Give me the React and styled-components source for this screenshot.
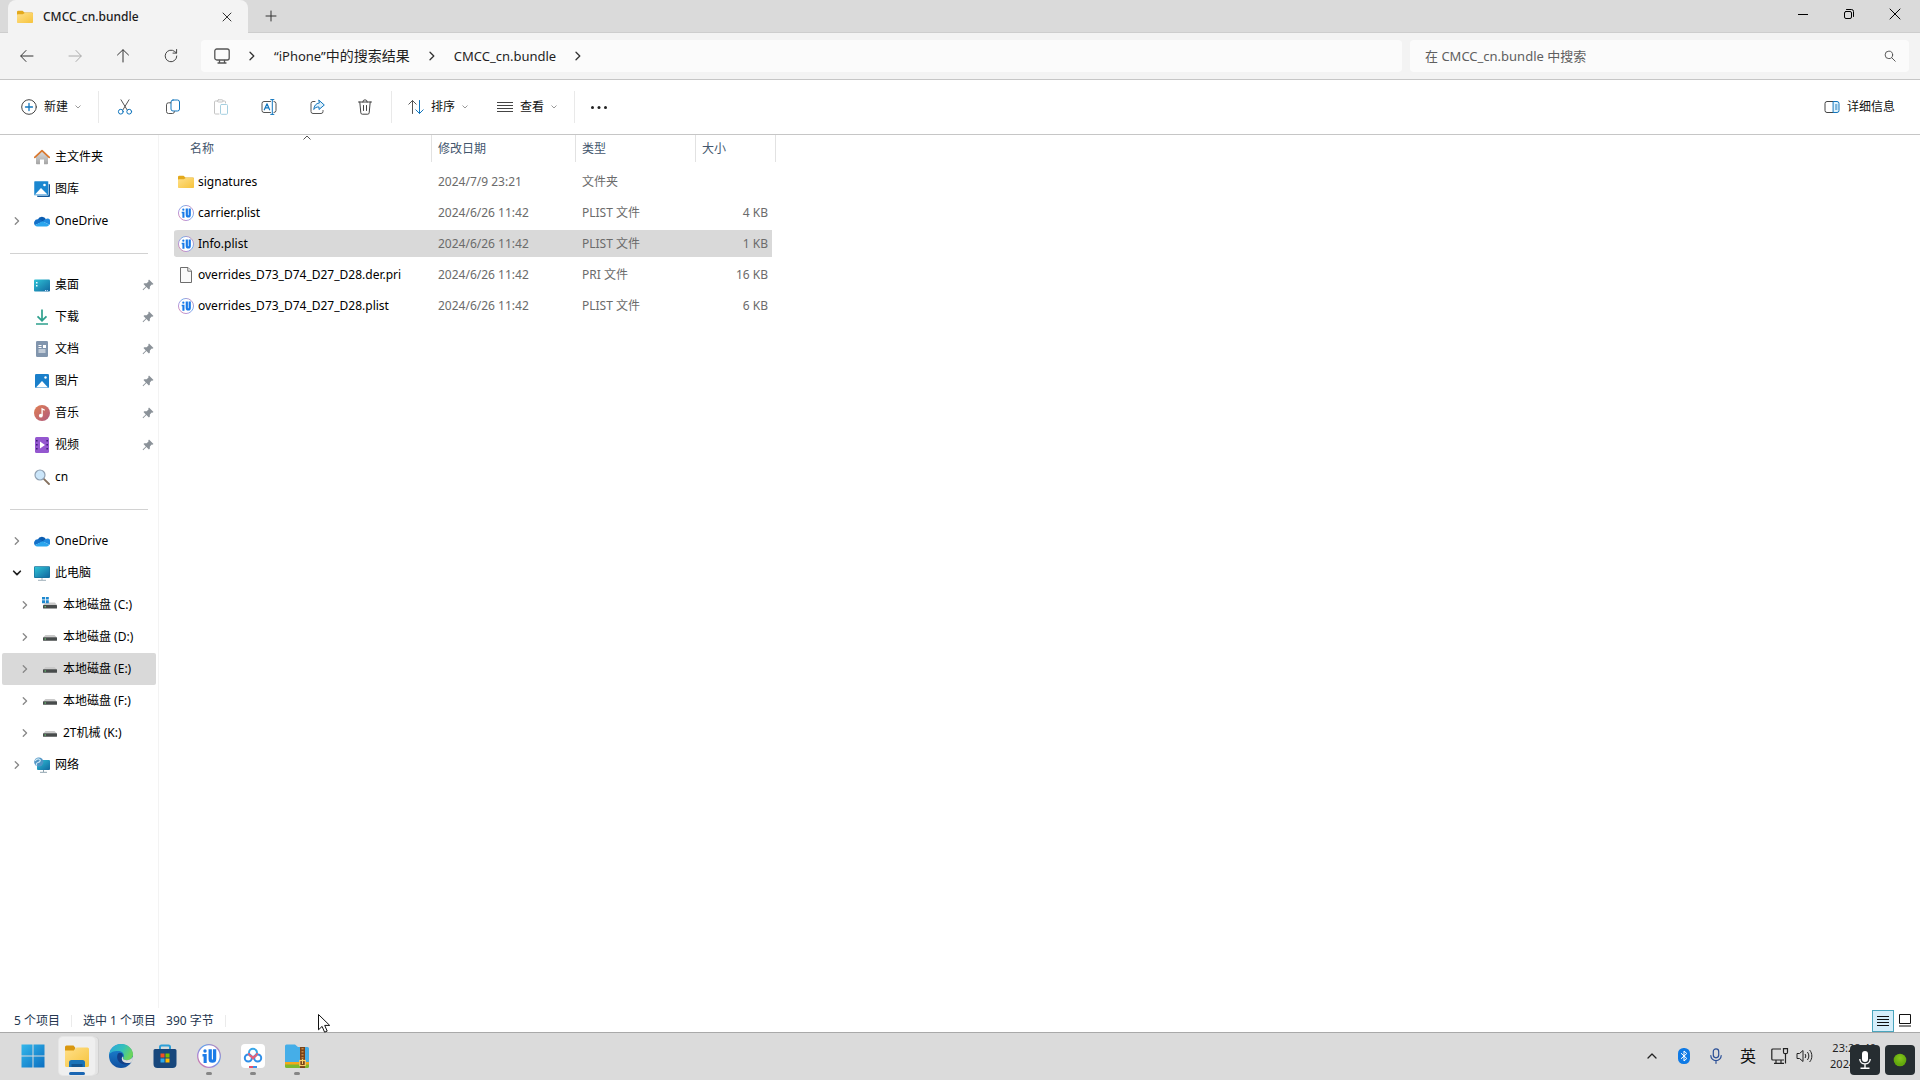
import React from "react";
import styled, { createGlobalStyle, css } from "styled-components";

const FONT = '"Noto Sans", "Noto Sans CJK SC", sans-serif';

const Global = createGlobalStyle`
  * { box-sizing: border-box; }
  html, body { margin: 0; padding: 0; }
  body { font-family: ${FONT}; font-size: 12px; color: #000; background: #fff; overflow: hidden; }
  button, input { font: inherit; color: inherit; }
  button { border: 0; padding: 0; margin: 0; background: none; cursor: default; }
  svg { display: block; flex: none; }
`;

/* ---------- shell ---------- */
const Window = styled.div`
  display: flex;
  flex-direction: column;
  height: 100vh;
`;

/* ---------- title bar ---------- */
const TitleBar = styled.header`
  display: flex;
  height: 33px;
  padding-left: 8px;
  padding-right: 2px;
  background: #dadada;
  border-bottom: 1px solid #cdcdcd;
`;
const Tab = styled.div`
  display: flex;
  align-items: center;
  width: 240px;
  height: 33px;
  padding: 0 11px 0 9px;
  gap: 10px;
  background: #f3f3f3;
  border-radius: 8px 8px 0 0;
  font-weight: 500;
  color: #1b1b1b;
`;
const TabTitle = styled.span`
  flex: 1;
  line-height: 16px;
`;
const TabButton = styled.button`
  display: grid;
  place-items: center;
  width: ${(p) => p.$w || 20}px;
  height: 32px;
`;
const Spacer = styled.div`
  flex: 1;
`;
const WinButton = styled.button`
  display: grid;
  place-items: center;
  width: 46px;
  height: 28px;
`;

/* ---------- navigation bar ---------- */
const NavBar = styled.nav`
  display: flex;
  align-items: center;
  height: 47px;
  padding: 0 11px 0 3px;
  background: #f3f3f3;
  border-bottom: 1px solid #c6c6c6;
`;
const NavButton = styled.button`
  display: grid;
  place-items: center;
  width: 48px;
  height: 32px;
`;
const Address = styled.div`
  display: flex;
  align-items: center;
  flex: 1188;
  height: 32px;
  margin-left: 6px;
  padding-left: 13px;
  background: #fbfbfb;
  border-radius: 4px;
  font-size: 14px;
  color: #1f1f1f;
`;
const Crumb = styled.button`
  line-height: 20px;
  white-space: nowrap;
`;
const Latin = styled.span`
  font-size: 13px;
`;
const CrumbArrow = styled.span`
  display: grid;
  place-items: center;
  width: 44px;
`;
const SearchBox = styled.label`
  display: flex;
  align-items: center;
  flex: 471;
  height: 32px;
  margin-left: 8px;
  padding: 0 13px 0 15px;
  background: #fbfbfb;
  border-radius: 4px;
`;
const SearchInput = styled.input`
  flex: 1;
  min-width: 0;
  padding: 0;
  border: 0;
  outline: 0;
  background: transparent;
  font-size: 13px;
  line-height: 20px;
  &::placeholder { color: #5f5f5f; opacity: 1; }
`;

/* ---------- command bar ---------- */
const CommandBar = styled.div`
  display: flex;
  align-items: center;
  height: 55px;
  padding: 0 25px 0 11px;
  background: #fff;
  border-bottom: 1px solid #c6c6c6;
`;
const Command = styled.button`
  display: flex;
  align-items: center;
  justify-content: center;
  gap: 7px;
  height: 32px;
  padding: 0 ${(p) => p.$pad || 0}px;
  width: ${(p) => (p.$icon ? "48px" : "auto")};
  color: #111;
  line-height: 16px;
`;
const Separator = styled.i`
  width: 1px;
  height: 32px;
  margin-left: ${(p) => p.$before || 0}px;
  margin-right: ${(p) => p.$after || 0}px;
  background: #e9e9e9;
`;

/* ---------- body ---------- */
const Main = styled.div`
  display: flex;
  flex: 1;
  min-height: 0;
`;
const Sidebar = styled.aside`
  width: 159px;
  padding-top: 6px;
  border-right: 1px solid #f3f3f3;
`;
const SideList = styled.ul`
  list-style: none;
  margin: 0;
  padding: 0;
`;
const SideItem = styled.li`
  display: flex;
  align-items: center;
  height: 32px;
  margin: 0 2px;
  padding-left: ${(p) => (p.$nested ? 16 : 8)}px;
  border-radius: 2px;
  background: ${(p) => (p.$selected ? "#d9d9d9" : "transparent")};
`;
const Expander = styled.button`
  width: 14px;
  height: 16px;
  display: grid;
  place-items: center;
  margin-right: 10px;
`;
const SideLink = styled.a`
  display: flex;
  align-items: center;
  flex: 1;
  gap: 5px;
  color: #000;
  text-decoration: none;
  line-height: 16px;
`;
const PinSlot = styled.span`
  padding-right: 2px;
`;
const SideRule = styled.hr`
  height: 1px;
  border: 0;
  margin: 16px 10px 15px;
  background: #d2d2d2;
`;

/* ---------- file table ---------- */
const Content = styled.main`
  flex: 1;
  padding-left: 15px;
`;
const Table = styled.table`
  border-spacing: 0;
  table-layout: fixed;
  width: 602px;
`;
const HeadCell = styled.th`
  position: relative;
  width: ${(p) => p.$w}px;
  height: 31px;
  padding: 0 0 4px;
  text-align: left;
  font-weight: 400;
  color: #43566d;
`;
const HeadLabel = styled.div`
  display: flex;
  align-items: center;
  height: 27px;
  padding: 0 0 2px ${(p) => (p.$first ? 16 : 6)}px;
  border-right: 1px solid #e2e2e2;
`;
const SortMark = styled.span`
  position: absolute;
  top: 0;
  left: 50%;
`;
const Cell = styled.td`
  height: 31px;
  padding: 0 0 0 ${(p) => (p.$first ? 4 : 6)}px;
  border: 0 solid transparent;
  border-width: 2px 0;
  background-clip: padding-box;
  color: #6b6b6b;
  line-height: 16px;
  white-space: nowrap;
  ${(p) => p.$first && css`color: #000; border-radius: 4px 0 0 4px;`}
  ${(p) => p.$last && css`
    text-align: right;
    padding-right: 4px;
    border-right-width: 4px;
    border-radius: 0 4px 4px 0;
  `}
`;
const FileRow = styled.tr`
  ${Cell} { background-color: ${(p) => (p.$selected ? "#d9d9d9" : "transparent")}; }
`;
const FileName = styled.span`
  display: flex;
  align-items: center;
  gap: 4px;
`;

/* ---------- status bar ---------- */
const StatusBar = styled.footer`
  display: flex;
  align-items: center;
  height: 24px;
  padding: 1px 4px 0 14px;
  color: #24364f;
  line-height: 16px;
`;
const StatusRule = styled.i`
  width: 1px;
  height: 12px;
  margin: 0 11px;
  background: #ebebeb;
`;
const StatusGap = styled.span`
  width: 10px;
`;
const ViewButton = styled.button`
  display: grid;
  place-items: center;
  width: 22px;
  height: 22px;
  ${(p) => p.$on && css`background: #d5eefa; border: 1px solid #4aa5bd;`}
`;

/* ---------- task bar ---------- */
const TaskBar = styled.footer`
  position: relative;
  display: flex;
  align-items: center;
  height: 48px;
  padding: 0 44px 2px 11px;
  background: #dbdbdb;
  border-top: 1px solid #a9a9a9;
`;
const TaskButton = styled.button`
  position: relative;
  display: grid;
  place-items: center;
  width: 44px;
  height: 40px;
`;
const TaskPlate = styled.span`
  display: grid;
  place-items: center;
  width: 36px;
  height: 38px;
  border-radius: 4px;
  ${(p) => p.$on && css`background: #efefef; box-shadow: 0 0 0 1px #e6e6e6, 3px 0 0 0 #e4e4e4, 4px 0 0 0 #cfcfcf;`}
`;
const Running = styled.i`
  position: absolute;
  left: 50%;
  bottom: 1px;
  width: ${(p) => (p.$on ? 16 : 6)}px;
  height: 3px;
  margin-left: ${(p) => (p.$on ? -8 : -3)}px;
  border-radius: 2px;
  background: ${(p) => (p.$on ? "#1a66b3" : "#868686")};
`;
const Tray = styled.div`
  display: flex;
  align-items: center;
  height: 100%;
`;
const TrayButton = styled.button`
  display: grid;
  place-items: center;
  width: ${(p) => p.$w || 32}px;
  height: 32px;
  font-size: 16px;
  line-height: 20px;
  color: #111;
`;
const Clock = styled.button`
  width: 64px;
  text-align: right;
  font-size: 11px;
  line-height: 16px;
  color: #222;
`;
const Overlay = styled.div`
  position: absolute;
  top: 12px;
  right: 5px;
  display: flex;
  gap: 5px;
`;
const OverlayKey = styled.button`
  display: grid;
  place-items: center;
  width: 30px;
  height: 30px;
  border-radius: 4px;
  background: #262d31;
`;
const Pointer = styled.svg`
  position: fixed;
  left: 317px;
  top: 1013px;
`;

/* ---------- icons ---------- */
const Line = ({ size = 16, c = "#444", w = 1, children, ...r }) => (
  <svg width={size} height={size} viewBox="0 0 16 16" fill="none" stroke={c} strokeWidth={w} strokeLinecap="round" strokeLinejoin="round" aria-hidden="true" {...r}>
    {children}
  </svg>
);
const Chevron = ({ dir = "right", c = "#333", size = 16, w = 1 }) => {
  const d = { right: "M6 4.2 9.8 8 6 11.8", down: "M4.2 6 8 9.8 11.8 6", up: "M4 10 8 6l4 4" }[dir];
  return <Line c={c} size={size} w={w}><path d={d} /></Line>;
};
const SmallDown = () => (
  <svg width="6" height="4" viewBox="0 0 6 4" fill="none" stroke="#999" aria-hidden="true"><path d="M.5.5 3 3 5.5.5" /></svg>
);
const Folder = () => (
  <svg width="16" height="16" viewBox="0 0 16 16" aria-hidden="true">
    <defs><linearGradient id="fold" x1="0" y1="0" x2="1" y2="1"><stop offset="0" stopColor="#ffe08a" /><stop offset="1" stopColor="#f6c33c" /></linearGradient></defs>
    <path d="M0 3a1.3 1.3 0 0 1 1.3-1.3h4.2L7.5 3.5H15a1 1 0 0 1 1 1V8H0z" fill="#e3a91c" />
    <path d="M0 6.2C0 5.5.4 5.2 1 5.2h4.800L7.800 3.900H15c.6 0 1 .4 1 1v8c0 .7-.4 1.100-1 1.100H1c-.6 0-1-.4-1-1.100z" fill="url(#fold)" />
  </svg>
);
const IU = ({ size = 16 }) => (
  <svg width={size} height={size} viewBox="0 0 24 24" aria-hidden="true">
    <defs><linearGradient id="iu" x1="0" y1="1" x2="1" y2="0"><stop offset="0" stopColor="#e0708f" /><stop offset=".3" stopColor="#a98ad8" /><stop offset=".6" stopColor="#5aa0ee" /><stop offset="1" stopColor="#e07aa8" /></linearGradient></defs>
    <circle cx="12" cy="12" r="11.300" fill="#fff" stroke="url(#iu)" strokeWidth="1.300" />
    <circle cx="8" cy="7" r="1.700" fill="#1a7be8" />
    <path d="M5.500 10h4.200v9H6.600v-6.500H5.500z" fill="#1a7be8" />
    <path d="M13.200 5.300v9.700a2.200 2.200 0 0 0 4.400 0V5.300" fill="none" stroke="#1a7be8" strokeWidth="3.300" />
  </svg>
);
const Doc = () => (
  <svg width="16" height="16" viewBox="0 0 16 16" fill="#fafafa" stroke="#6d6d6d" aria-hidden="true"><path d="M2.500.5h7.500l3.500 3.500v11.500h-11z" /><path d="M9.800.7v3.500h3.500" /></svg>
);
const SideIcons = {
  home: (
    <svg width="16" height="16" viewBox="0 0 16 16">
      <defs><linearGradient id="hm" x1="0" y1="0" x2="0" y2="1"><stop offset="0" stopColor="#dedede" /><stop offset="1" stopColor="#a4a4a4" /></linearGradient></defs>
      <path d="M2 7.500 8 2l6 5.500V14.500a.8.8 0 0 1-.8.8H10V10.500H6v4.800H2.800a.8.8 0 0 1-.8-.8z" fill="url(#hm)" />
      <path d="M.8 8.300 8 1.700l7.200 6.600" fill="none" stroke="#d9782f" strokeWidth="1.800" strokeLinejoin="round" strokeLinecap="round" />
    </svg>
  ),
  gallery: (
    <svg width="16" height="16" viewBox="0 0 16 16">
      <path d="M3 3h12a1 1 0 0 1 1 1v11a1 1 0 0 1-1 1H4a1 1 0 0 1-1-1z" fill="#11579a" />
      <path d="M1 0h12.500a1 1 0 0 1 1 1v12.500a1 1 0 0 1-1 1H1a1 1 0 0 1-1-1V1a1 1 0 0 1 1-1z" fill="#1b87d0" stroke="#fff" strokeWidth=".5" />
      <path d="M1 13.500 7 7l6.500 6.500z" fill="#fff" /><circle cx="10.500" cy="4" r="1.300" fill="#fff" />
    </svg>
  ),
  cloud: (
    <svg width="16" height="16" viewBox="0 0 16 16">
      <path d="M3.800 6.500A4.500 4.500 0 0 1 12 6.300L8 11z" fill="#0b5cb0" />
      <path d="M3.500 6.300A3.700 3.700 0 0 0 .8 12.200L9 8.500 6.500 6.800a4 4 0 0 0-3-.5z" fill="#1470c8" />
      <path d="M8.500 8.300 11.500 6.200a3.300 3.300 0 0 1 3.800 5.500z" fill="#1e8ae0" />
      <path d="M.8 12.200A3.600 3.600 0 0 0 3.700 13.400h9a3.200 3.200 0 0 0 2.600-1.600L8.500 8.300z" fill="#2ba6ee" />
    </svg>
  ),
  desktop: (
    <svg width="16" height="16" viewBox="0 0 16 16">
      <defs><linearGradient id="dk" x1="0" y1="0" x2="1" y2="1"><stop offset="0" stopColor="#2fc3d6" /><stop offset="1" stopColor="#11679f" /></linearGradient></defs>
      <rect y="2.500" width="16" height="12" rx="1" fill="url(#dk)" />
      <path d="M2 5h1.500v1.500H2zM2 8h1.500v1.500H2z" fill="#e8fbff" /><path d="M11 13h1v1h-1zM12.800 13h1v1h-1z" fill="#cdf" />
    </svg>
  ),
  download: (
    <svg width="16" height="16" viewBox="0 0 16 16" fill="none" stroke="#2ea08d" strokeWidth="1.700">
      <path d="M8 .5v11M3.500 7.300 8 11.700l4.500-4.400M2 15h12" />
    </svg>
  ),
  documents: (
    <svg width="16" height="16" viewBox="0 0 16 16">
      <rect x="2" y="0" width="12" height="16" rx="1.300" fill="#8195ad" />
      <path d="M4.500 4.500h3M4.500 6.500h3M4.500 9h7M4.500 11h7" stroke="#fff" /><path d="M9 4h3v3H9z" fill="#fff" />
    </svg>
  ),
  pictures: (
    <svg width="16" height="16" viewBox="0 0 16 16">
      <rect x="1" y="1" width="14" height="14" rx="1.300" fill="#1a7fca" />
      <path d="M2 14.500 8 8l6 6.500z" fill="#fff" /><circle cx="11.500" cy="4.500" r="1.200" fill="#fff" />
    </svg>
  ),
  music: (
    <svg width="16" height="16" viewBox="0 0 16 16">
      <defs><linearGradient id="mu" x1="0" y1="0" x2="1" y2="1"><stop offset="0" stopColor="#e07f52" /><stop offset="1" stopColor="#b0597f" /></linearGradient></defs>
      <circle cx="8" cy="8" r="8" fill="url(#mu)" /><circle cx="6.800" cy="10.700" r="1.900" fill="#fff" />
      <path d="M8.100 10.700V3.800L10.700 5.300" fill="none" stroke="#fff" strokeWidth="1.300" />
    </svg>
  ),
  video: (
    <svg width="16" height="16" viewBox="0 0 16 16">
      <rect x="1" y="0" width="14" height="16" rx="1.500" fill="#9457cf" />
      <path d="M2 3h1.600v1.600H2zM2 7h1.600v1.600H2zM2 11h1.600v1.600H2zM12.400 3H14v1.600h-1.600zM12.400 7H14v1.600h-1.600zM12.400 11H14v1.600h-1.600z" fill="#40207a" />
      <path d="M6 4.500 11 8l-5 3.500z" fill="#fff" />
    </svg>
  ),
  search: (
    <svg width="16" height="16" viewBox="0 0 16 16">
      <path d="M9.800 9.800 15 15" stroke="#85715f" strokeWidth="1.800" strokeLinecap="round" /><circle cx="6" cy="6" r="5" fill="#cbe6fa" stroke="#8fa0b2" strokeWidth="1.200" />
    </svg>
  ),
  pc: (
    <svg width="16" height="16" viewBox="0 0 16 16">
      <rect y="1.300" width="16" height="11.700" rx="1" fill="#16729c" /><rect x=".7" y="2" width="14.600" height="10.300" rx=".5" fill="url(#dk)" />
      <path d="M8 13v2M4 15.300h8" stroke="#9fb0ba" />
    </svg>
  ),
  driveC: (
    <svg width="16" height="16" viewBox="0 0 16 16">
      <path d="M4 5.500h9l2 2.500H1z" fill="#c9c9c9" /><rect x="1" y="8" width="14" height="3.500" rx=".5" fill="#474b4b" /><path d="M2.500 9.300H4v1H2.500z" fill="#6fdc7a" />
      <path d="M0-.500h3v3H0zM3.800-.500h3v3h-3zM0 3.300h3v3H0zM3.800 3.300h3v3h-3z" fill="#1e88cf" />
    </svg>
  ),
  drive: (
    <svg width="16" height="16" viewBox="0 0 16 16">
      <path d="M3.500 6h9L15 8.500H1z" fill="#c9c9c9" /><rect x="1" y="8.300" width="14" height="3.500" rx=".5" fill="#474b4b" /><path d="M2.500 9.600H4v1H2.500z" fill="#6fdc7a" />
    </svg>
  ),
  network: (
    <svg width="16" height="16" viewBox="0 0 16 16">
      <rect x="3" y="3" width="13" height="10" rx="1" fill="url(#dk)" /><path d="M9.500 13v2M6 15.300h7" stroke="#8fa3ae" />
      <circle cx="4.800" cy="5" r="4.600" fill="#4e93c4" /><path d="M1 4c1.500-2 3-2.500 4.500-1.800S6 5 4 5.500 2 7.500 3 8.500" fill="none" stroke="#cfe9f5" strokeWidth="1.200" />
    </svg>
  ),
};
const Pin = () => (
  <svg width="12" height="12" viewBox="0 0 12 12" aria-hidden="true">
    <path d="M7 .5 11.500 5l-1.200.700-.6-.1-1.800 1.900-.1 2.200-.9.700-2.500-2.500L1.200 11.200.6 10.600 3.800 7.400 1.500 5.100l.8-.8 2.400-.1L6.500 2.400l-.2-.8z" fill="#8b9299" />
  </svg>
);
const Blue = "#1276bd";
const CutIcon = () => (
  <Line c="#555"><path d="M4 .8 10.200 11M12 .8 5.800 11" /><circle cx="3.800" cy="12.700" r="2.400" stroke={Blue} /><circle cx="12.200" cy="12.700" r="2.400" stroke={Blue} /></Line>
);
const CopyIcon = () => (
  <Line c="#555"><rect x="6" y="1" width="8.500" height="11" rx="2" stroke={Blue} /><path d="M5.800 3.800H3.500a2 2 0 0 0-2 2V12.500a2 2 0 0 0 2 2h4a2 2 0 0 0 2-1.800" /></Line>
);
const PasteIcon = () => (
  <Line c="#c4c4c4"><path d="M4.500 2H2.500a1 1 0 0 0-1 1v11a1 1 0 0 0 1 1h3.500M10 2h1.500a1 1 0 0 1 1 1v1" /><rect x="4.500" y=".8" width="5.500" height="2.200" rx="1" /><rect x="7.500" y="5.500" width="7" height="9.800" rx="1" stroke="#a5cfe0" /></Line>
);
const RenameIcon = () => (
  <Line c="#555"><path d="M9.500 2.500H3a2 2 0 0 0-2 2v7a2 2 0 0 0 2 2h6.500M13 2.500a2 2 0 0 1 2 2v7a2 2 0 0 1-2 2" /><path d="M9.700.6h3.200M11.300.6v14.800M9.700 15.400h3.200" stroke={Blue} /><path d="M3.300 10.800 6 4.800l2.600 6M4.200 8.800h3.600" stroke={Blue} strokeWidth="1.200" /></Line>
);
const ShareIcon = () => (
  <Line c="#555"><path d="M6 2.500H4a2 2 0 0 0-2 2v8a2 2 0 0 0 2 2h8a2 2 0 0 0 2-2v-1" /><path d="M10 1.300 15.300 6 10 10.500V8C7.500 7.800 5.800 8.800 4.800 10.500 5 6.800 7 4.300 10 4z" stroke={Blue} fill="#dff0fb" /></Line>
);
const TrashIcon = () => (
  <Line c="#444"><path d="M1.500 3h13M5.800 3a2.200 2.200 0 0 1 4.400 0M2.800 3l1 10.800a1.500 1.500 0 0 0 1.500 1.400h5.400a1.500 1.500 0 0 0 1.500-1.400L13.200 3M6.500 6.500v5M9.500 6.500v5" /></Line>
);

/* ---------- data ---------- */
const quick = [
  ["home", "主文件夹"],
  ["gallery", "图库"],
  ["cloud", "OneDrive", "right"],
];
const pinned = [
  ["desktop", "桌面"],
  ["download", "下载"],
  ["documents", "文档"],
  ["pictures", "图片"],
  ["music", "音乐"],
  ["video", "视频"],
];
const tree = [
  { icon: "cloud", label: "OneDrive", open: "right" },
  { icon: "pc", label: "此电脑", open: "down" },
  { icon: "driveC", label: "本地磁盘 (C:)", open: "right", nested: true },
  { icon: "drive", label: "本地磁盘 (D:)", open: "right", nested: true },
  { icon: "drive", label: "本地磁盘 (E:)", open: "right", nested: true, selected: true },
  { icon: "drive", label: "本地磁盘 (F:)", open: "right", nested: true },
  { icon: "drive", label: "2T机械 (K:)", open: "right", nested: true },
  { icon: "network", label: "网络", open: "right" },
];
const columns = [
  ["名称", 258],
  ["修改日期", 144],
  ["类型", 120],
  ["大小", 80],
];
const files = [
  [<Folder />, "signatures", "2024/7/9 23:21", "文件夹", ""],
  [<IU />, "carrier.plist", "2024/6/26 11:42", "PLIST 文件", "4 KB"],
  [<IU />, "Info.plist", "2024/6/26 11:42", "PLIST 文件", "1 KB"],
  [<Doc />, "overrides_D73_D74_D27_D28.der.pri", "2024/6/26 11:42", "PRI 文件", "16 KB"],
  [<IU />, "overrides_D73_D74_D27_D28.plist", "2024/6/26 11:42", "PLIST 文件", "6 KB"],
];

const SideEntry = ({ icon, label, open, nested, selected, pin }) => (
  <SideItem $nested={nested} $selected={selected}>
    <Expander aria-label={open ? "展开 " + label : undefined} disabled={!open} aria-hidden={!open}>
      {open && <Chevron dir={open} c={open === "down" ? "#222" : "#888"} size={14} w={open === "down" ? 2 : 1.500} />}
    </Expander>
    <SideLink href="#">
      {SideIcons[icon]}
      {label}
    </SideLink>
    {pin && <PinSlot><Pin /></PinSlot>}
  </SideItem>
);

/* ---------- taskbar icons ---------- */
const StartIcon = () => (
  <svg width="24" height="24" viewBox="0 0 24 24">
    <defs><linearGradient id="st" gradientUnits="userSpaceOnUse" x1="0" y1="0" x2="24" y2="24"><stop offset="0" stopColor="#35b9ec" /><stop offset="1" stopColor="#0a6dc0" /></linearGradient></defs>
    <path d="M.5.500h11v11H.500zM12.500.5h11v11h-11zM.500 12.500h11v11H.500zM12.500 12.500h11v11h-11z" fill="url(#st)" />
  </svg>
);
const ExplorerIcon = () => (
  <svg width="24" height="24" viewBox="0 0 24 24">
    <path d="M0 3a1.500 1.500 0 0 1 1.500-1.500h7L10.500 4 9 7H0z" fill="#d9970f" />
    <path d="M0 6.500 9 6.500 11.500 3.500H22.500A1.500 1.500 0 0 1 24 5v16.500a1.500 1.500 0 0 1-1.500 1.500h-21A1.500 1.500 0 0 1 0 21.500z" fill="url(#fold)" />
    <path d="M4 18.500A2.500 2.500 0 0 1 6.500 16h11a2.500 2.500 0 0 1 2.500 2.500V23H4z" fill="#1a73b8" /><path d="M6.500 20h11v3h-11z" fill="#125590" />
  </svg>
);
const EdgeIcon = () => (
  <svg width="24" height="24" viewBox="0 0 24 24">
    <defs>
      <linearGradient id="e1" x1="0" y1="0" x2="1" y2=".4"><stop offset="0" stopColor="#2aa5e0" /><stop offset=".6" stopColor="#35c1b8" /><stop offset="1" stopColor="#6bd45c" /></linearGradient>
      <linearGradient id="e2" x1="0" y1="0" x2="0" y2="1"><stop offset="0" stopColor="#1d8bd8" /><stop offset="1" stopColor="#0f4f9f" /></linearGradient>
    </defs>
    <circle cx="12" cy="12" r="12" fill="url(#e2)" />
    <path d="M.1 11C.8 4.500 5.800 0 12 0c7 0 12 5 12 10.300 0 3.500-2.700 5.900-6 5.900-3 0-4-1.200-4-1.900 0-.6.900-1 .9-2.700C14.900 9 12.500 7 9 7 4.500 7 .8 8.500.100 11z" fill="url(#e1)" />
    <path d="M9 9.500c-2.300 4 0 9.500 5.300 10.800 3.200.7 6-.3 8-2-2.300 1-9 1.500-9.600-3.800-.2-1.700 1-2 1-3.500C13.500 9 10.500 8 9 9.500z" fill="#123f88" />
    <path d="M13.900 14.300c0 1 1.200 1.900 4.100 1.900 3 0 5-1.700 5.700-3.400.7 2.500-.3 4.700-1.600 5.600-2.400 1-9.200 1.300-9.300-3.900 0-.9.500-1.500.9-2.100.500.800.2 1.400.2 1.900z" fill="#dbdbdb" />
  </svg>
);
const StoreIcon = () => (
  <svg width="24" height="24" viewBox="0 0 24 24">
    <path d="M7 6V3a1.500 1.500 0 0 1 1.500-1.500h7A1.500 1.500 0 0 1 17 3v3" fill="none" stroke="#2d9fd8" strokeWidth="2" />
    <path d="M.5 6.500A1.500 1.500 0 0 1 2 5h20a1.500 1.500 0 0 1 1.500 1.500V20a4 4 0 0 1-4 4h-15a4 4 0 0 1-4-4z" fill="#17477c" />
    <path d="M7.500 9.500h4v4h-4z" fill="#f25022" /><path d="M12.500 9.500h4v4h-4z" fill="#7fba00" /><path d="M7.500 14.500h4v4h-4z" fill="#29a8ea" /><path d="M12.500 14.500h4v4h-4z" fill="#ffb900" />
  </svg>
);
const NetdiskIcon = () => (
  <svg width="24" height="24" viewBox="0 0 24 24" fill="none">
    <rect width="24" height="24" rx="4" fill="#fff" />
    <circle cx="7.300" cy="14" r="3.500" stroke="#2f8fe8" strokeWidth="2" /><circle cx="16.700" cy="14" r="3.500" stroke="#2f8fe8" strokeWidth="2" />
    <circle cx="12" cy="8.800" r="4" stroke="#3aa7e8" strokeWidth="2" /><path d="M8 9a4 4 0 0 0 8 0M9.500 11.500 12 14.500l2.500-3" stroke="#e0617c" strokeWidth="2" />
    <path d="M8 23h4" stroke="#e8506a" strokeWidth="2" /><path d="M12 23h4" stroke="#3a8fe8" strokeWidth="2" />
  </svg>
);
const ZipIcon = () => (
  <svg width="24" height="24" viewBox="0 0 24 24">
    <path d="M0 2A1.500 1.500 0 0 1 1.500.5H10L13 3h9.500A1.500 1.500 0 0 1 24 4.500V19H0z" fill="#45aee8" />
    <path d="M0 18h24v3H0z" fill="#f3a81c" /><path d="M0 20.500h24v2a1.500 1.500 0 0 1-1.500 1.500h-21A1.500 1.500 0 0 1 0 22.500z" fill="#7cb82f" />
    <path d="M15 3h5v21h-5z" fill="#7a4318" /><path d="M17.500 4v13" stroke="#c98a45" strokeDasharray="1.500 1.500" strokeWidth="2" />
    <rect x="14.800" y="16.500" width="5.500" height="5" fill="#6e3513" stroke="#f7cf6b" strokeWidth="1.200" /><path d="M17.500 15v5" stroke="#f7cf6b" strokeWidth="1.200" />
  </svg>
);

export default function App() {
  return (
    <Window>
      <Global />
      <TitleBar>
        <Tab>
          <Folder />
          <TabTitle>CMCC_cn.bundle</TabTitle>
          <TabButton aria-label="关闭标签页"><Line c="#333"><path d="M4 4l8 8M12 4l-8 8" /></Line></TabButton>
        </Tab>
        <TabButton $w={46} aria-label="新建标签页"><Line c="#333"><path d="M8 3v10M3 8h10" /></Line></TabButton>
        <Spacer />
        <WinButton aria-label="最小化"><Line c="#000" strokeLinecap="butt"><path d="M3 8.500h10" /></Line></WinButton>
        <WinButton aria-label="还原"><Line c="#000"><rect x="3.500" y="5.500" width="7" height="7" rx="1.500" /><path d="M5.500 3.500H10.500a2 2 0 0 1 2 2v5" /></Line></WinButton>
        <WinButton aria-label="关闭"><Line c="#000"><path d="M3 3l10 10M13 3 3 13" /></Line></WinButton>
      </TitleBar>

      <NavBar>
        <NavButton aria-label="后退"><Line c="#333"><path d="M14 8H2M7 2.500 1.700 8 7 13.500" /></Line></NavButton>
        <NavButton aria-label="前进" disabled><Line c="#aaa"><path d="M2 8h12M9 2.500 14.300 8 9 13.500" /></Line></NavButton>
        <NavButton aria-label="上移"><Line c="#333"><path d="M8 14V2M2.500 7 8 1.700 13.500 7" /></Line></NavButton>
        <NavButton aria-label="刷新"><Line c="#444"><path d="M13.800 8A5.800 5.800 0 1 1 11.700 3.500L13.500 5M13.600 1.500V5.100H10" /></Line></NavButton>
        <Address>
          <Line c="#555" w={1.300}><rect x=".8" y="1" width="14.400" height="11" rx="2" /><path d="M5.500 12.300v2.500M10.500 12.300v2.500M4 15h8" /></Line>
          <CrumbArrow><Chevron w={1.300} /></CrumbArrow>
          <Crumb><Latin>“iPhone”</Latin>中的搜索结果</Crumb>
          <CrumbArrow><Chevron w={1.300} /></CrumbArrow>
          <Crumb><Latin>CMCC_cn.bundle</Latin></Crumb>
          <CrumbArrow><Chevron w={1.300} /></CrumbArrow>
        </Address>
        <SearchBox>
          <SearchInput type="text" aria-label="搜索" placeholder="在 CMCC_cn.bundle 中搜索" />
          <Line size={12} c="#555" w={1.300}><circle cx="6.500" cy="6.500" r="5" /><path d="M10.300 10.300 15 15" /></Line>
        </SearchBox>
      </NavBar>

      <CommandBar>
        <Command $pad={10}>
          <Line c="#444"><circle cx="8" cy="8" r="7.300" /><path d="M8 4.500v7M4.500 8h7" stroke={Blue} strokeWidth="1.300" /></Line>
          新建
          <SmallDown />
        </Command>
        <Separator $before={7} $after={2} />
        <Command $icon aria-label="剪切"><CutIcon /></Command>
        <Command $icon aria-label="复制"><CopyIcon /></Command>
        <Command $icon aria-label="粘贴" disabled><PasteIcon /></Command>
        <Command $icon aria-label="重命名"><RenameIcon /></Command>
        <Command $icon aria-label="共享"><ShareIcon /></Command>
        <Command $icon aria-label="删除"><TrashIcon /></Command>
        <Separator $before={2} />
        <Command $pad={16}>
          <Line c="#555"><path d="M4.500 14.500V1.500M.8 5.200 4.500 1.500l3.700 3.700" /><path d="M11.500 1.500v13M7.800 10.800l3.700 3.700 3.700-3.700" stroke={Blue} /></Line>
          排序
          <SmallDown />
        </Command>
        <Command $pad={13}>
          <Line c="#444" strokeLinecap="butt"><path d="M0 3.500h16M0 6.500h16M0 9.500h16M0 12.500h16" /></Line>
          查看
          <SmallDown />
        </Command>
        <Separator $before={4} />
        <Command $icon aria-label="更多">
          <svg width="16" height="16" viewBox="0 0 16 16" fill="#222"><circle cx="1.500" cy="8.500" r="1.500" /><circle cx="8" cy="8.500" r="1.500" /><circle cx="14.500" cy="8.500" r="1.500" /></svg>
        </Command>
        <Spacer />
        <Command>
          <Line c="#444"><path d="M9.500 2.500H3a2 2 0 0 0-2 2v7a2 2 0 0 0 2 2h6.500" /><path d="M9.500 2.500H13a2 2 0 0 1 2 2v7a2 2 0 0 1-2 2H9.500z" stroke={Blue} fill="#e2f4fd" /><path d="M11.500 6h1.500M11.500 8h1.500M11.500 10h1.500" stroke={Blue} /></Line>
          详细信息
        </Command>
      </CommandBar>

      <Main>
        <Sidebar>
          <SideList>
            {quick.map(([icon, label, open]) => <SideEntry key={label} icon={icon} label={label} open={open} />)}
          </SideList>
          <SideRule />
          <SideList>
            {pinned.map(([icon, label]) => <SideEntry key={label} icon={icon} label={label} pin />)}
            <SideEntry icon="search" label="cn" />
          </SideList>
          <SideRule />
          <SideList>
            {tree.map((t) => <SideEntry key={t.label} {...t} />)}
          </SideList>
        </Sidebar>
        <Content>
          <Table>
            <thead>
              <tr>
                {columns.map(([label, w], i) => (
                  <HeadCell key={label} $w={w} scope="col">
                    <HeadLabel $first={i === 0}>{label}</HeadLabel>
                    {i === 0 && <SortMark><svg width="8" height="5" viewBox="0 0 8 5" fill="none" stroke="#555"><path d="M.5 4.500 4 1l3.500 3.500" /></svg></SortMark>}
                  </HeadCell>
                ))}
              </tr>
            </thead>
            <tbody>
              {files.map(([icon, name, date, type, size]) => (
                <FileRow key={name} $selected={name === "Info.plist"}>
                  <Cell $first><FileName>{icon}{name}</FileName></Cell>
                  <Cell>{date}</Cell>
                  <Cell>{type}</Cell>
                  <Cell $last>{size}</Cell>
                </FileRow>
              ))}
            </tbody>
          </Table>
        </Content>
      </Main>

      <StatusBar>
        <span>5 个项目</span>
        <StatusRule />
        <span>选中 1 个项目</span>
        <StatusGap />
        <span>390 字节</span>
        <StatusRule />
        <Spacer />
        <ViewButton $on aria-label="详细信息视图">
          <svg width="12" height="12" viewBox="0 0 12 12" stroke="#111"><path d="M0 1.500h12M0 4.500h12M0 7.500h12M0 10.500h12" /></svg>
        </ViewButton>
        <ViewButton aria-label="大图标视图">
          <svg width="12" height="13" viewBox="0 0 12 13" fill="none" stroke="#111"><path d="M.5.500h11v9H.500zM0 12h12" /></svg>
        </ViewButton>
      </StatusBar>

      <TaskBar>
        <TaskButton aria-label="开始"><TaskPlate><StartIcon /></TaskPlate></TaskButton>
        <TaskButton aria-label="文件资源管理器"><TaskPlate $on><ExplorerIcon /></TaskPlate><Running $on /></TaskButton>
        <TaskButton aria-label="Microsoft Edge"><TaskPlate><EdgeIcon /></TaskPlate></TaskButton>
        <TaskButton aria-label="Microsoft Store"><TaskPlate><StoreIcon /></TaskPlate></TaskButton>
        <TaskButton aria-label="iU"><TaskPlate><IU size={24} /></TaskPlate><Running /></TaskButton>
        <TaskButton aria-label="网盘"><TaskPlate><NetdiskIcon /></TaskPlate><Running /></TaskButton>
        <TaskButton aria-label="压缩"><TaskPlate><ZipIcon /></TaskPlate><Running /></TaskButton>
        <Spacer />
        <Tray>
          <TrayButton aria-label="显示隐藏的图标"><Chevron dir="up" c="#222" w={1.300} /></TrayButton>
          <TrayButton aria-label="蓝牙">
            <svg width="12" height="16" viewBox="0 0 12 16"><rect width="12" height="16" rx="5.500" fill="#0f7ae5" /><path d="M3 5.200 8.800 10.500 6 13V3l2.800 2.500L3 10.800" fill="none" stroke="#fff" /></svg>
          </TrayButton>
          <TrayButton aria-label="麦克风"><Line c="#2a4f96" w={1.200}><rect x="5.300" y=".8" width="5.400" height="9" rx="2.700" /><path d="M2.800 7.500a5.200 5.200 0 0 0 10.400 0M8 12.800v2.500" /></Line></TrayButton>
          <TrayButton>英</TrayButton>
          <TrayButton aria-label="网络">
            <svg width="18" height="16" viewBox="0 0 18 16" fill="none" stroke="#222" strokeWidth="1.200"><path d="M10 1H1.800a1 1 0 0 0-1 1v9a1 1 0 0 0 1 1H13M5 12v3M10 12v3M3 15.300h10M12.500.6h4v3.600a1.500 1.500 0 0 1-1.500 1.500h-1a1.500 1.500 0 0 1-1.500-1.500zM14.500 6v9.500" /></svg>
          </TrayButton>
          <TrayButton $w={16} aria-label="音量">
            <svg width="18" height="16" viewBox="0 0 18 16" fill="none" stroke="#222"><path d="M1 5.500h2.500L7 2.500v11L3.500 10.500H1zM9 6c1 1.200 1 2.800 0 4M11.300 4c2 2.300 2 5.700 0 8M13.600 2c3 3.400 3 8.600 0 12" /></svg>
          </TrayButton>
          <Clock>23:28:40<br />2024/7/9</Clock>
        </Tray>
        <Overlay>
          <OverlayKey aria-label="录制麦克风">
            <svg width="16" height="20" viewBox="0 0 16 20" fill="none"><rect x="5" y="1" width="6" height="11" rx="3" fill="#fff" /><path d="M2.800 9c0 6.500 10.400 6.500 10.400 0M8 14v4M3.500 18.300h9" stroke="#fff" strokeWidth="1.400" /></svg>
          </OverlayKey>
          <OverlayKey aria-label="录制">
            <svg width="14" height="14" viewBox="0 0 14 14"><defs><radialGradient id="gr" cx=".5" cy=".35"><stop offset="0" stopColor="#86c71c" /><stop offset="1" stopColor="#63a80c" /></radialGradient></defs><circle cx="7" cy="7" r="6.300" fill="url(#gr)" /></svg>
          </OverlayKey>
        </Overlay>
      </TaskBar>
      <Pointer width="14" height="21" viewBox="0 0 14 21" aria-hidden="true">
        <path d="M1.500 1.500v15.300l3.600-3.400 2.500 5.800 2.600-1.100-2.500-5.700h5z" fill="#fff" stroke="#111" />
      </Pointer>
    </Window>
  );
}
